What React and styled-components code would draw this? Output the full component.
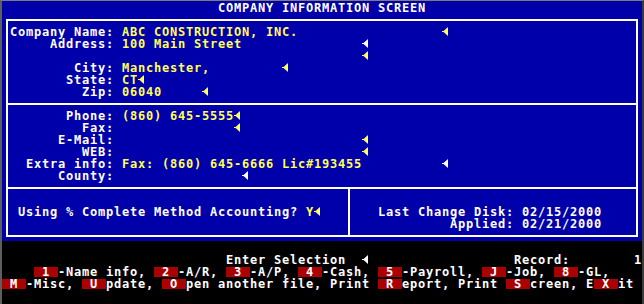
import React from 'react';
import styled, { createGlobalStyle } from 'styled-components';

// Text-mode grid: every character cell is 8px wide, 12px tall
const CELL = 8;

const GlobalStyle = createGlobalStyle`
  html, body {
    margin: 0;
    padding: 0;
    background: #000;
  }
`;

const Terminal = styled.div`
  box-sizing: border-box;
  width: 644px;
  height: 304px;
  background: #000;
  border-top: 1px solid #7c7c7c;
  border-left: 2px solid #5e5e5e;
  border-right: 2px solid #3c3c3c;
  font-family: "DejaVu Sans Mono", "Liberation Mono", monospace;
  font-weight: bold;
  font-size: 12px;
  letter-spacing: 0.776px;
  color: #fff;
  overflow: hidden;
`;

const Screen = styled.div`
  box-sizing: border-box;
  height: 240px;
  background: #0000aa;
  padding: 0 4px 4px;
  display: flex;
  flex-direction: column;
`;

const Line = styled.div`
  box-sizing: border-box;
  height: 12px;
  padding-top: 2px;
  line-height: 10px;
  white-space: pre;
  text-align: ${(p) => p.$align || 'left'};
`;

const Title = styled(Line)`
  text-align: center;
  margin-bottom: 6px;
`;

const Frame = styled.div`
  flex: 1;
  border: 2px solid #fff;
  display: flex;
  flex-direction: column;
`;

const Section = styled.div`
  box-sizing: border-box;
  height: ${(p) => (p.$divided ? 84 : 82)}px;
  padding: 4px 0 0 2px;
  border-top: ${(p) => (p.$divided ? '2px solid #fff' : 'none')};
`;

const FieldGrid = styled.div`
  display: grid;
  grid-template-columns: ${13 * CELL}px 1fr;
  column-gap: ${CELL}px;
  grid-auto-rows: 12px;
`;

const Label = styled(Line)`
  text-align: right;
`;

const Value = styled.div`
  display: flex;
  align-items: flex-start;
`;

const FieldText = styled(Line)`
  width: ${(p) => p.$cells * CELL}px;
  color: #ffff55;
`;

const Yellow = styled.span`
  color: #ffff55;
`;

const StatusRow = styled.div`
  flex: 1;
  display: flex;
  border-top: 2px solid #fff;
`;

const StatusLeft = styled.div`
  width: 342px;
  border-right: 2px solid #fff;
  padding: 16px 0 0 10px;
  box-sizing: border-box;
`;

const StatusRight = styled.div`
  flex: 1;
  padding: 16px 34px 0 0;
`;

const InlineRow = styled.div`
  display: flex;
  align-items: flex-start;
`;

const Footer = styled.div`
  padding-top: 12px;
`;

const Key = styled.span`
  display: inline-block;
  width: ${3 * CELL}px;
  height: 10px;
  line-height: 11px;
  background: #aa0000;
  color: #fff;
`;

const ArrowBox = styled.svg`
  display: block;
  flex-shrink: 0;
  width: ${CELL}px;
  height: 12px;
`;

const InlineArrow = styled.span`
  display: inline-block;
  vertical-align: top;
  margin-top: -2px;
  width: ${CELL}px;
  height: 12px;
`;

const Arrow = ({ color = '#ffff55' }) => (
  <ArrowBox viewBox="0 0 8 12">
    <polygon points="1,6.5 6,2 6,11" fill={color} />
    <rect x="0" y="6" width="2" height="1" fill={color} />
  </ArrowBox>
);

const nameFields = [
  { label: 'Company Name:', value: 'ABC CONSTRUCTION, INC.', cells: 40 },
  { label: 'Address:', value: '100 Main Street', cells: 30, arrow: '#fff' },
  { label: '', value: '', cells: 30 },
  { label: 'City:', value: 'Manchester,', cells: 20 },
  { label: 'State:', value: 'CT', cells: 2 },
  { label: 'Zip:', value: '06040', cells: 10 },
];

const contactFields = [
  { label: 'Phone:', value: '(860) 645-5555', cells: 14 },
  { label: 'Fax:', value: '', cells: 14 },
  { label: 'E-Mail:', value: '', cells: 30 },
  { label: 'WEB:', value: '', cells: 30 },
  { label: 'Extra info:', value: 'Fax: (860) 645-6666 Lic#193455', cells: 40, arrow: '#fff' },
  { label: 'County:', value: '', cells: 15, arrow: '#fff' },
];

const menuLines = [
  ['    ', { k: '1' }, '-Name info, ', { k: '2' }, '-A/R, ', { k: '3' }, '-A/P, ', { k: '4' }, '-Cash, ',
    { k: '5' }, '-Payroll, ', { k: 'J' }, '-Job, ', { k: '8' }, '-GL,'],
  [{ k: 'M' }, '-Misc, ', { k: 'U' }, 'pdate, ', { k: 'O' }, 'pen another file, Print ', { k: 'R' },
    'eport, Print ', { k: 'S' }, 'creen, E', { k: 'X' }, 'it'],
];

const Fields = ({ rows }) => (
  <FieldGrid>
    {rows.map((f, i) => (
      <React.Fragment key={i}>
        <Label>{f.label}</Label>
        <Value>
          <FieldText $cells={f.cells}>{f.value}</FieldText>
          <Arrow color={f.arrow} />
        </Value>
      </React.Fragment>
    ))}
  </FieldGrid>
);

export default function App() {
  return (
    <>
      <GlobalStyle />
      <Terminal>
        <Screen>
          <Title>COMPANY INFORMATION SCREEN</Title>
          <Frame>
            <Section>
              <Fields rows={nameFields} />
            </Section>
            <Section $divided>
              <Fields rows={contactFields} />
            </Section>
            <StatusRow>
              <StatusLeft>
                <InlineRow>
                  <Line>
                    Using % Complete Method Accounting? <Yellow>Y</Yellow>
                  </Line>
                  <Arrow />
                </InlineRow>
              </StatusLeft>
              <StatusRight>
                <Line $align="right">Last Change Disk: 02/15/2000</Line>
                <Line $align="right">Applied: 02/21/2000</Line>
              </StatusRight>
            </StatusRow>
          </Frame>
        </Screen>
        <Footer>
          <Line>
            {'                            Enter Selection  '}
            <InlineArrow>
              <Arrow color="#fff" />
            </InlineArrow>
            {'                  Record:        1'}
          </Line>
          {menuLines.map((parts, i) => (
            <Line key={i}>
              {parts.map((p, j) =>
                typeof p === 'string' ? p : <Key key={j}>{` ${p.k} `}</Key>
              )}
            </Line>
          ))}
        </Footer>
      </Terminal>
    </>
  );
}
